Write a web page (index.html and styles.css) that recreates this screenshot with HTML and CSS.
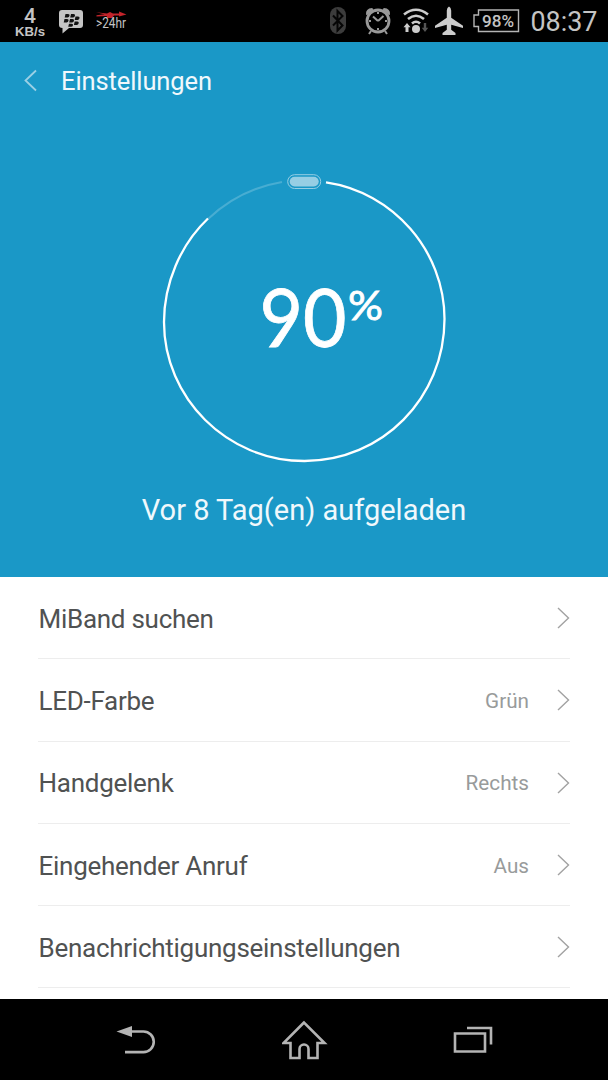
FILE: index.html
```
<!DOCTYPE html>
<html lang="de">

<head>
  <meta charset="utf-8">
  <meta name="viewport" content="width=device-width, initial-scale=1.0">
  <title>Einstellungen</title>
  <link rel="stylesheet" href="styles.css">
</head>

<body>

  <!-- Status bar -->
  <div class="status-bar">
    <svg class="status-icons" width="608" height="42" viewBox="0 0 608 42">
      <g class="status-left">
        <text x="30" y="22.500" font-size="21" text-anchor="middle" textLength="12" lengthAdjust="spacingAndGlyphs" class="bold">4</text>
        <text x="15" y="35.500" font-size="12" textLength="30" lengthAdjust="spacingAndGlyphs" class="speed">KB/s</text>
        <path d="M62 10h18q3 0 3 3v12q0 3-3 3H69l-6.500 5.500V28q-3.500 0-3.500-3V13q0-3 3-3z" />
        <g class="bbm-dots">
          <path d="M65.500 14h2.500q2 0 1.500 1.800t-2 1.700h-2.800zM71 14h2.500q2 0 1.500 1.800t-2 1.700h-2.800zM64.500 19h2.500q2 0 1.500 1.800t-2 1.700h-2.800zM70 19h2.500q2 0 1.500 1.800t-2 1.700h-2.800zM75.500 16.500H78q2 0 1.500 1.800t-2 1.700h-2.800zM74.700 21.500h2.500q2 0 1.500 1.800t-2 1.700h-2.800zM69 23.700h2.500q2 0 1.500 1.600t-2 1.500h-2.800z" />
        </g>
        <path class="red" d="M96 12.200l11 1.300 3-1.500 3 1.500h6V11.500l7.500 3-7.500 2V15.500h-5l-2 2.500h-6l1-2-10.500.5v-1.200l8-1z" />
        <text x="96" y="28" font-size="14" textLength="30" lengthAdjust="spacingAndGlyphs">&gt;24hr</text>
      </g>

      <!-- bluetooth -->
      <rect class="bt" x="330" y="7" width="16" height="27" rx="8" />
      <path class="bt-rune" d="M333 15.500l9.500 10-5 5V11l5 5-9.500 9.500" />

      <!-- alarm -->
      <g class="alarm">
        <circle cx="378" cy="21" r="11" />
        <path d="M378 21l-5-4.500M378 21l5.500-5M378 12v2M378 28v2M369 21h2M385 21h2M371 31l-2 3M385 31l2 3" />
        <path class="alarm-bell" d="M366 14.500q-.5-6 6-6.500l1.500 1.200-6.500 6zM390 14.500q.5-6-6-6.500l-1.500 1.200 6.500 6z" />
      </g>

      <!-- wifi -->
      <g class="wifi">
        <path d="M404 14.500q12-9.500 24 0M408 19q8-6.500 16 0M412 23.500q4-3.500 8 0" />
      </g>
      <g class="light">
        <circle cx="416" cy="29" r="4" />
        <path d="M407 23l3.500 4.200h-2V32h-3v-4.800h-2z" />
      </g>
      <path class="dim" d="M425 32l-3.200-4.200h2V23h2.400v4.800h2z" />

      <!-- airplane -->
      <path class="light" d="M449 6.500q2 1 2.200 4v7.300l11.800 8V28l-11.800-3.300v5l4.300 3.300v2h-13v-2l4.300-3.300v-5L435 28v-2.200l11.800-8v-7.300q.2-3 2.200-4z" />

      <!-- battery -->
      <path class="battery" d="M478.500 10h40v21.500h-40v-5H474V15h4.500z" />
      <text class="status-right bold" x="482" y="27" font-size="17" textLength="32" lengthAdjust="spacingAndGlyphs">98%</text>
      <text class="status-right" x="530.500" y="31.200" font-size="27" textLength="67" lengthAdjust="spacingAndGlyphs">08:37</text>
    </svg>
  </div>

  <header class="hero">
    <div class="title-bar">
      <svg class="back" width="14" height="24" viewBox="0 0 14 24">
        <path d="M12 1.500L1.500 11.500 12 21.500" />
      </svg>
      <h1>Einstellungen</h1>
    </div>

    <!-- Battery ring -->
    <svg class="ring" width="304" height="304" viewBox="152 166 304 304">
      <path class="ring-rest" d="M208 219A141 140 0 0 1 282 182" />
      <path class="ring-charge" d="M326 182.300C393 192 444.500 251 444.500 319C444.500 398 382 461 304.500 461C227 461 164 398 164 322C164 284 180 245 208 218.500" />
      <rect class="band-outline" x="287.700" y="174.700" width="33" height="13.800" rx="6.900" />
      <rect class="band" x="289.700" y="176.700" width="29" height="9.800" rx="4.900" />
      <text class="percent-value" x="259.500" y="347" textLength="87" lengthAdjust="spacingAndGlyphs">90</text>
      <text class="percent-sign" x="348" y="319.500" textLength="35" lengthAdjust="spacingAndGlyphs">%</text>
    </svg>

    <p class="charged">Vor 8 Tag(en) aufgeladen</p>
  </header>

  <main class="settings">
    <a class="row">
      <span class="label">MiBand suchen</span>
      <svg class="chevron" width="13" height="22" viewBox="0 0 13 22"><path d="M1 1l10.500 10L1 21" /></svg>
    </a>
    <a class="row">
      <span class="label">LED-Farbe</span>
      <span class="value">Grün</span>
      <svg class="chevron" width="13" height="22" viewBox="0 0 13 22"><path d="M1 1l10.500 10L1 21" /></svg>
    </a>
    <a class="row">
      <span class="label">Handgelenk</span>
      <span class="value">Rechts</span>
      <svg class="chevron" width="13" height="22" viewBox="0 0 13 22"><path d="M1 1l10.500 10L1 21" /></svg>
    </a>
    <a class="row">
      <span class="label">Eingehender Anruf</span>
      <span class="value">Aus</span>
      <svg class="chevron" width="13" height="22" viewBox="0 0 13 22"><path d="M1 1l10.500 10L1 21" /></svg>
    </a>
    <a class="row">
      <span class="label">Benachrichtigungseinstellungen</span>
      <svg class="chevron" width="13" height="22" viewBox="0 0 13 22"><path d="M1 1l10.500 10L1 21" /></svg>
    </a>
  </main>

  <!-- Navigation keys -->
  <nav class="nav-bar">
    <svg width="40" height="40" viewBox="116 1020 40 40">
      <path d="M130 1031.500h13.500a10.300 10.300 0 0 1 0 20.600H125" />
      <path class="nav-fill" d="M116.500 1031.500l15.500-5.500v11z" />
    </svg>
    <svg width="46" height="40" viewBox="282 1020 46 40">
      <path d="M304 1022.500l-20.500 20.500h7v15h9v-9a4.500 4.500 0 0 1 9 0v9h9v-15h7z" />
    </svg>
    <svg width="40" height="40" viewBox="453 1020 40 40">
      <path d="M455 1033.500h30v18h-30zM467 1028h24v16.500" />
    </svg>
  </nav>

</body>

</html>
```
FILE: styles.css
```
body {
  font-family: Roboto, Arial, sans-serif;
  margin: 0;
  padding: 0;
  background-color: #000;
  overflow: hidden;
}

.status-bar {
  height: 42px;
  background-color: #000;
}

.status-icons {
  display: block;
  fill: #c4c4c4;
}

.bold {
  font-weight: 500;
}

.speed {
  font-family: "Liberation Sans", Arial, sans-serif;
  font-weight: bold;
}

.bbm-dots {
  fill: #111;
}

.red {
  fill: #c4242b;
}

.bt {
  fill: #3c3c3c;
}

.bt-rune {
  fill: none;
  stroke: #050505;
  stroke-width: 2;
}

.alarm {
  fill: none;
  stroke: #999;
  stroke-width: 2;
}

.alarm circle {
  stroke-width: 2.8;
}

.alarm .alarm-bell {
  fill: #999;
  stroke: none;
}

.wifi {
  fill: none;
  stroke: #ccc;
  stroke-width: 2.6;
}

.light {
  fill: #ccc;
}

.dim {
  fill: #555;
}

.battery {
  fill: none;
  stroke: #b4b4b4;
  stroke-width: 1.4;
}

.hero {
  display: flex;
  flex-direction: column;
  align-items: center;
  height: 535px;
  background-color: #1a98c7;
  color: #f0f8fc;
}

.title-bar {
  display: flex;
  align-items: center;
  align-self: stretch;
  gap: 23px;
  height: 77px;
  padding-left: 24px;
}

.title-bar h1 {
  margin: 1px 0 0;
  font-size: 25.5px;
  font-weight: 400;
  letter-spacing: -0.1px;
}

.back {
  fill: none;
  stroke: #9bd0e5;
  stroke-width: 1.8;
}

.ring {
  margin-top: 47px;
}

.ring-charge {
  fill: none;
  stroke: #fff;
  stroke-width: 2.3;
}

.ring-rest {
  fill: none;
  stroke: #48add2;
  stroke-width: 2;
}

.band {
  fill: #96cee4;
}

.band-outline {
  fill: none;
  stroke: #96cee4;
  stroke-width: 1;
}

.percent-value,
.percent-sign {
  font-family: Lato, sans-serif;
  fill: #fff;
  stroke: #fff;
  stroke-width: 0.8;
}

.percent-value {
  font-size: 82px;
  font-weight: 400;
}

.percent-sign {
  font-size: 41px;
  font-weight: 400;
}

.charged {
  margin: 20px 0 0;
  font-size: 29px;
  line-height: 40px;
}

.settings {
  height: 422px;
  padding: 0 38px;
  background-color: #fff;
}

.row {
  display: flex;
  align-items: center;
  box-sizing: border-box;
  height: 82.3px;
  padding-top: 2px;
  border-bottom: 1px solid #ededed;
}

.label {
  flex: 1;
  padding-left: 0.5px;
  font-size: 26px;
  letter-spacing: -0.27px;
  color: #505252;
}

.value {
  margin-right: 28px;
  font-size: 20.7px;
  color: #989b9b;
}

.chevron {
  margin-bottom: 1px;
  fill: none;
  stroke: #a2a2a2;
  stroke-width: 1.4;
}

.nav-bar {
  display: flex;
  justify-content: space-between;
  align-items: center;
  height: 81px;
  padding: 0 115px 0 116px;
  background-color: #000;
}

.nav-bar svg {
  fill: none;
  stroke: #b4b4b4;
  stroke-width: 2.6;
}

.nav-bar .nav-fill {
  fill: #b4b4b4;
  stroke: none;
}
```
